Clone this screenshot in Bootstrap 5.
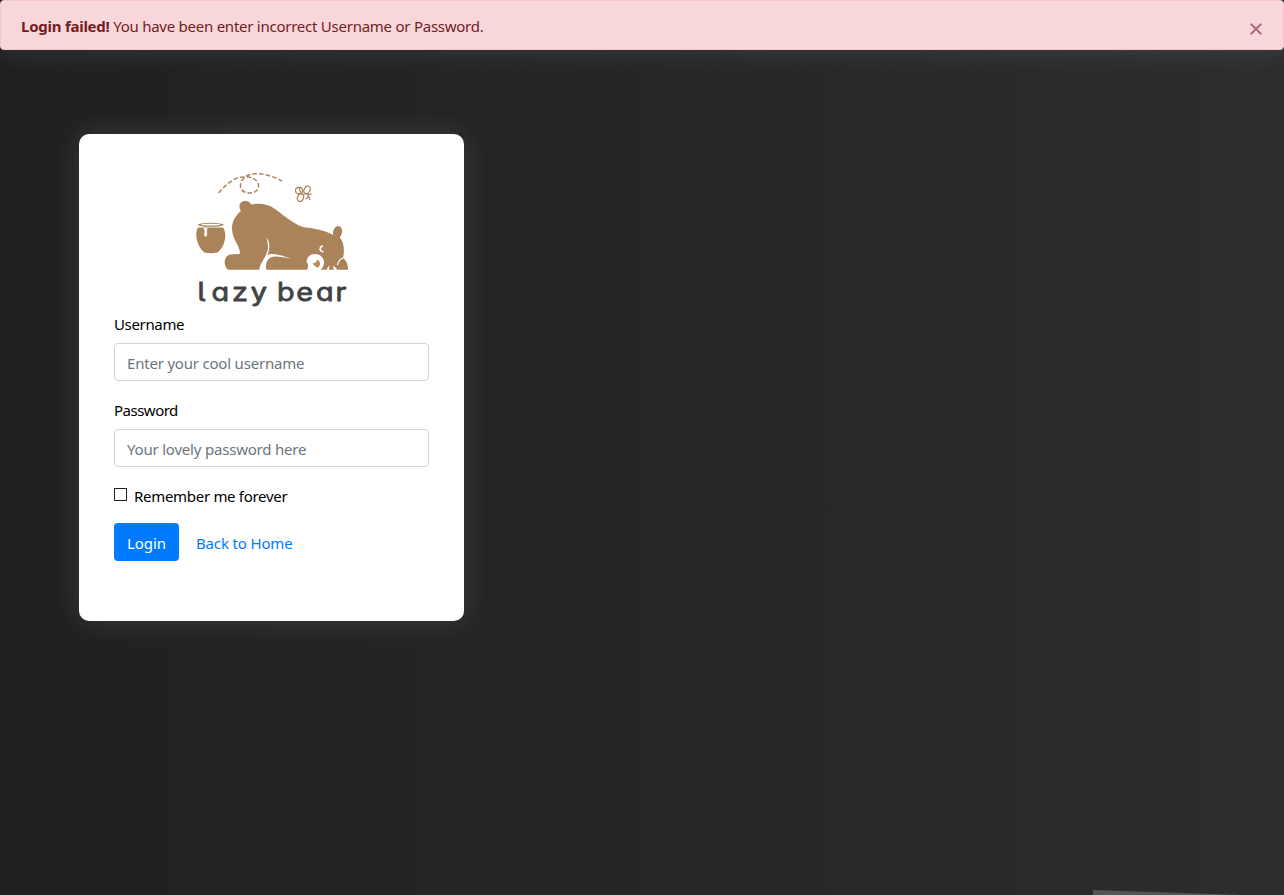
<!DOCTYPE html>
<html lang="en">
<head>
<meta charset="utf-8">
<meta name="viewport" content="width=device-width, initial-scale=1">
<title>Lazy Bear - Login</title>
<link href="https://cdn.jsdelivr.net/npm/bootstrap@5.3.0/dist/css/bootstrap.min.css" rel="stylesheet">
<style>
body{font-family:"Noto Sans",sans-serif;font-size:15px;letter-spacing:-.25px;color:#000;background:linear-gradient(90deg,#202020,#252525 45%,#2d2d2d);height:100vh;overflow:hidden}
.login-alert{height:50px;padding:13px 20px 10px;line-height:24px;background:#f8d7da;border:1px solid #f5c6cb;border-radius:4px;color:#721c24;box-shadow:0 0 30px rgba(190,215,220,.14)}
.dismiss{width:12px;height:12px;margin:9px 1px 0 0;opacity:.55}
.dismiss,.dismiss:hover{color:#721c24}
.login-card{width:385px;height:487px;margin:84px 0 0 79px;padding:35px;border:0;border-radius:10px;box-shadow:0 0 30px rgba(255,255,255,.12);color:#000}
.logo{width:165px;height:142px}
.wordmark{font-family:Inter,sans-serif;font-size:25px;font-weight:400;font-feature-settings:"cv11","cv05";letter-spacing:0}
.login-card label{line-height:24px;padding-top:1px;height:24px;letter-spacing:-.3px}
.login-card label[for=user]{letter-spacing:-.35px}
.login-card label[for=pass]{letter-spacing:-.5px}
.login-card .form-control{height:38px;font-size:15px;letter-spacing:-.2px;border-color:#ced4da;border-radius:4px;padding:7px 12px 5px}
.form-control::placeholder{color:#6c757d}
.tick{appearance:none;width:13px;height:13px;border:1px solid #222;background:#fff;margin:5px 7px 0 0}
.login-btn{width:65px;height:38px;background:#007bff;border:0;border-radius:4px;font-size:15px;letter-spacing:-.1px;padding:2px 0 0}
.home-link{color:#007bff;padding-top:3px;margin-left:17px;text-decoration:none;letter-spacing:-.15px}
.floor{width:191px;height:6px}
</style>
</head>
<body>
<div class="login-alert d-flex justify-content-between" role="alert">
  <div><strong>Login failed!</strong> You have been enter incorrect Username or Password.</div>
  <button class="btn p-0 border-0 lh-1 d-flex dismiss" type="button" aria-label="Close"><svg width="12" height="12" viewBox="0 0 12 12"><path d="M.7 .7L11.300 11.300M11.300 .7L.7 11.300" stroke="currentColor" stroke-width="2"/></svg></button>
</div>
<main class="card login-card">
  <svg class="logo mx-auto d-block flex-shrink-0" viewBox="189 169 165 142" role="img" aria-label="lazy bear">
    <g fill="none" stroke="#ab835a" stroke-width="1.5" stroke-dasharray="4.500 2.200">
      <path d="M218.700 193C226 184 235 177 243 177C252 176 258 180 258.500 185C259 190 255 193 250 193C244 193 240 190 240.500 185C241 180 245 176 250 174.500C260 172 273 176 282 181"/>
    </g>
    <g fill="none" stroke="#ab835a" stroke-width="1.200">
      <ellipse cx="299" cy="190.500" rx="3.500" ry="3.200"/>
      <ellipse cx="307" cy="190" rx="2.800" ry="4.200" transform="rotate(25 307 190)"/>
      <ellipse cx="300.500" cy="197.500" rx="3" ry="4" transform="rotate(20 300.500 197.500)"/>
      <path d="M299 188L302 195M303.500 194.500Q305 192 308 194.500Q309 198 305.500 199M308 194.500L312 194M308.500 196L310 200"/>
    </g>
    <g fill="#ab835a">
      <path d="M198 227.500H223C225 230 226 235 224.800 240C223.500 246 221 250 217.500 252.500Q211 254 204.500 252.500C200 249 197 243 196.300 236C196 232 197 229 198 227.500Z"/>
      <ellipse cx="210.700" cy="224.800" rx="13" ry="2"/>
      <path d="M240.800 211C237.500 204.500 241 201 245.500 201Q250 201 251 204.500C260 203 268 204 275 209C286 217 295 225 304 227.300C315 228.500 324 230 333 235C332.500 229 336 226 338.500 226C342.500 226 343.500 233 339.800 237.500C343.500 242 345 249 343 258C347 261 348 265 348 269.800H228C224 266 223.500 260 227 256C231 253 236 255 240 253.700C240 247 235 242 233 235C230 225 234 217 240.800 211Z"/>
    </g>
    <ellipse cx="210.700" cy="224.600" rx="10" ry=".8" fill="#fff"/>
    <path d="M203.500 228H207.500L206.800 231Q208 236 205.400 236.800Q203.500 236 204.700 231Z" fill="#fff"/>
    <path d="M259.300 270C259.500 263 267 257 268 248C268 243 267 239 266 237C271 242 269.500 251 267.200 255.500C272 252.500 278 254.500 291 258.500C279 257 272 254.500 267.800 260C266 263 265.500 266 266.500 270Z" fill="#fff"/>
    <path d="M307.500 270C306.500 268 310 267 306.700 262C306.500 257 310 254 315 254C321 254 324.500 259 324 263.500C323.500 267 321.500 269 320.500 270Z" fill="#fff"/>
    <path d="M312.500 263.500Q317 263 317 259.500Q320.500 261 320 264.500Q319 269 315.500 266.500Z" fill="#ba8d52"/>
    <path d="M323 246C319.500 246.500 318.500 251 323.500 251.800" fill="none" stroke="#fff" stroke-width="1.500"/>
    <path d="M327 270Q326.800 267 330 265.500Q328.500 267.500 329.200 270ZM334.500 270Q332.500 267.500 333.500 265.500Q335.500 267.500 337.500 270Z" fill="#fff"/>
    <path d="M343 258Q338.500 259.500 337.500 265" stroke="#fff" stroke-width="1.200" fill="none"/>
    <text class="wordmark" transform="scale(1.15 1)" x="171.800 184 201.700 218 231 240.800 257.600 274.800 291.700" y="301.300" fill="#414244" stroke="#414244" stroke-width=".8" stroke-linejoin="round">lazy bear</text>
  </svg>
  <form>
    <div class="mb-3"><label class="d-block mb-2" for="user">Username</label><input class="form-control" id="user" placeholder="Enter your cool username"></div>
    <div class="mb-3"><label class="d-block mb-2" for="pass">Password</label><input class="form-control" id="pass" type="password" placeholder="Your lovely password here"></div>
    <div class="d-flex mb-3"><input class="tick" type="checkbox" id="remember"><label for="remember">Remember me forever</label></div>
    <div class="d-flex align-items-center"><button class="btn btn-primary login-btn" type="button">Login</button><a class="home-link" href="#">Back to Home</a></div>
  </form>
</main>
<svg class="floor position-fixed bottom-0 end-0" viewBox="0 0 191 6"><path d="M0 1L150 6H0Z" fill="#565455"/></svg>
<script src="https://cdn.jsdelivr.net/npm/bootstrap@5.3.0/dist/js/bootstrap.bundle.min.js"></script>
</body>
</html>
